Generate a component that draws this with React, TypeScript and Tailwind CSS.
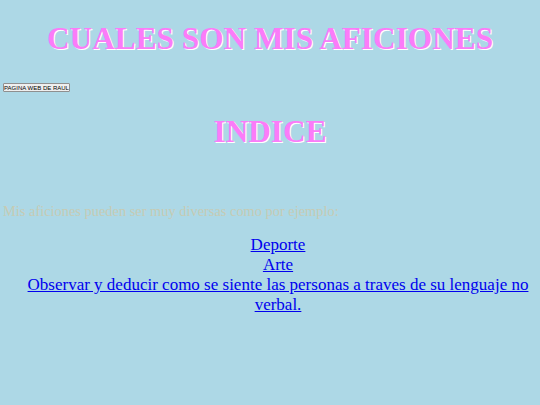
export default function App() {
  const heading =
    "m-0 text-center text-[31.3px] font-bold leading-[37px] text-[#fb7cf8] [text-shadow:1px_1px_0_#ffffff]";
  return (
    <div className="min-h-[405px] bg-[#add8e6] px-[3px] pt-[20px] font-['Liberation_Serif',serif]">
      <h1 className={heading}>CUALES SON MIS AFICIONES</h1>

      <div className="mt-[26px]">
        <button className="flex h-[9px] w-[67px] items-center justify-center whitespace-nowrap rounded-[1px] border border-[#8f8f8f] bg-[#efefef] font-['Liberation_Sans',sans-serif] text-[6px] leading-none text-black">
          PAGINA WEB DE RAUL
        </button>
      </div>

      <h1 className={`${heading} mt-[21px]`}>INDICE</h1>

      <p className="mt-[52px] text-[14.4px] leading-[18px] text-[#c6cbb4]">
        Mis aficiones pueden ser muy diversas como por ejemplo:
      </p>

      <div className="mt-[15px] flex flex-col items-center pl-[16px] text-center text-[17px] leading-[20px]">
        <a href="#" className="text-[#0000ee] underline">Deporte</a>
        <a href="#" className="text-[#0000ee] underline">Arte</a>
        <a href="#" className="text-[#0000ee] underline">
          Observar y deducir como se siente las personas a traves de su lenguaje no verbal.
        </a>
      </div>
    </div>
  );
}
